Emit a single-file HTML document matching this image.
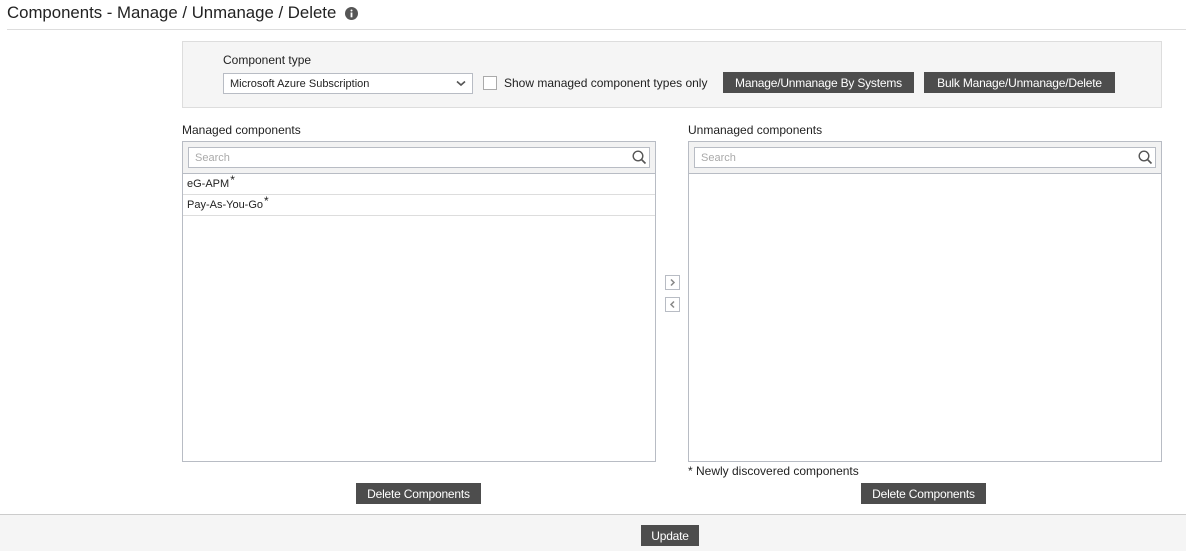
<!DOCTYPE html>
<html><head><style>
*{box-sizing:border-box;margin:0;padding:0}
body{width:1186px;height:551px;background:#fff;position:relative;overflow:hidden;font-family:"Liberation Sans",sans-serif;color:#222;font-size:12px}
.a{position:absolute}
.btn{position:absolute;background:#4d4d4d;color:#fff;font-size:12px;text-align:center;line-height:22px;height:21px;letter-spacing:-0.2px}
.list{position:absolute;border:1px solid #b8bcc4;background:#fff}
.lh{position:absolute;left:0;top:0;right:0;height:32px;background:#f2f2f2;border-bottom:1px solid #b8bcc4}
.srch{position:absolute;left:5px;top:5px;right:5px;height:21px;background:#fff;border:1px solid #b8bcc4;color:#aaa;font-size:11px;line-height:20px;padding-left:6px}
.row{position:absolute;left:0;right:0;height:21px;border-bottom:1px solid #ddd;font-size:11px;line-height:18px;padding-left:4px;color:#222}
.row span{position:relative;top:-3px;font-size:12px;margin-left:1px}
.arr{position:absolute;left:665px;width:15px;height:15px;border:1px solid #b8bcc4}
</style></head><body>
<div class="a" style="left:7px;top:3px;font-size:16.8px;color:#222">Components - Manage / Unmanage / Delete</div>
<svg class="a" style="left:345px;top:7px" width="13" height="13"><circle cx="6.5" cy="6.5" r="6.5" fill="#555"/><rect x="5.6" y="5.5" width="1.8" height="4.8" fill="#fff"/><circle cx="6.5" cy="3.5" r="1" fill="#fff"/></svg>
<div class="a" style="left:7px;top:29px;width:1179px;height:1px;background:#ddd"></div>

<div class="a" style="left:182px;top:41px;width:980px;height:67px;background:#f5f5f5;border:1px solid #ddd"></div>
<div class="a" style="left:223px;top:53px;font-size:12px">Component type</div>
<div class="a" style="left:223px;top:73px;width:250px;height:21px;background:#fff;border:1px solid #b8bcc4;font-size:11px;line-height:20px;padding-left:6px">Microsoft Azure Subscription</div>
<svg class="a" style="left:456px;top:80px" width="10" height="7"><path d="M1 1.5L5 5L9 1.5" stroke="#555" stroke-width="1.6" fill="none"/></svg>
<div class="a" style="left:483px;top:76px;width:14px;height:14px;background:#fff;border:1px solid #aaa"></div>
<div class="a" style="left:504px;top:76px;font-size:12px">Show managed component types only</div>
<div class="btn" style="left:723px;top:72px;width:191px">Manage/Unmanage By Systems</div>
<div class="btn" style="left:924px;top:72px;width:191px">Bulk Manage/Unmanage/Delete</div>

<div class="a" style="left:182px;top:123px">Managed components</div>
<div class="list" style="left:182px;top:141px;width:474px;height:321px">
<div class="lh"><div class="srch">Search</div>
<svg class="a" style="right:8px;top:8px" width="15" height="15"><circle cx="6" cy="6" r="4.8" stroke="#555" stroke-width="1.4" fill="none"/><path d="M9.5 9.5L13.5 13.5" stroke="#555" stroke-width="1.6"/></svg></div>
<div class="row" style="top:32px">eG-APM<span>*</span></div>
<div class="row" style="top:53px">Pay-As-You-Go<span>*</span></div>
</div>
<div class="arr" style="top:275px"><svg width="13" height="13"><path d="M5 3.5L8 6.5L5 9.5" stroke="#888" stroke-width="1.5" fill="none"/></svg></div>
<div class="arr" style="top:297px"><svg width="13" height="13"><path d="M8 3.5L5 6.5L8 9.5" stroke="#888" stroke-width="1.5" fill="none"/></svg></div>
<div class="a" style="left:688px;top:123px">Unmanaged components</div>
<div class="list" style="left:688px;top:141px;width:474px;height:321px">
<div class="lh"><div class="srch">Search</div>
<svg class="a" style="right:8px;top:8px" width="15" height="15"><circle cx="6" cy="6" r="4.8" stroke="#555" stroke-width="1.4" fill="none"/><path d="M9.5 9.5L13.5 13.5" stroke="#555" stroke-width="1.6"/></svg></div>
</div>
<div class="a" style="left:688px;top:464px">* Newly discovered components</div>
<div class="btn" style="left:356px;top:483px;width:125px">Delete Components</div>
<div class="btn" style="left:861px;top:483px;width:125px">Delete Components</div>

<div class="a" style="left:0;top:514px;width:1186px;height:37px;background:#f5f5f5;border-top:1px solid #ccc"></div>
<div class="btn" style="left:641px;top:525px;width:58px">Update</div>
</body></html>
